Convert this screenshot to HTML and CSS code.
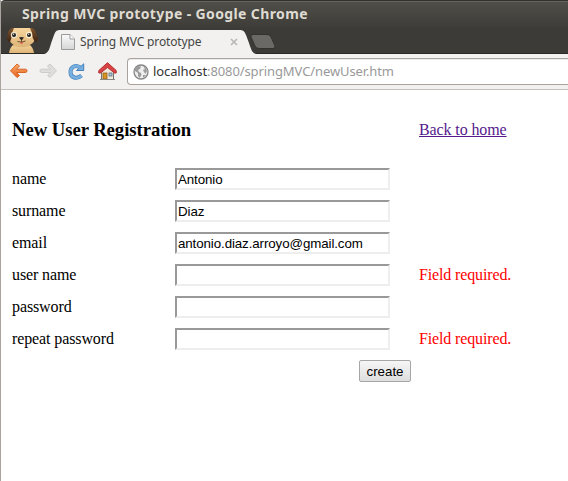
FILE: index.html
```html
<!DOCTYPE html>
<html lang="en">
<head>
<meta charset="utf-8">
<title>Spring MVC prototype</title>
<link rel="stylesheet" href="styles.css">
</head>
<body>
<div class="window">
  <header class="chrome">
    <div class="titlebar"><span class="window-title">Spring MVC prototype - Google Chrome</span></div>
    <div class="tabstrip">
      <svg class="avatar" width="32" height="25" viewBox="0 0 32 25">
        <defs>
          <linearGradient id="fur" x2="0" y2="1"><stop stop-color="#f5d69d"/><stop offset="1" stop-color="#dfb578"/></linearGradient>
          <linearGradient id="ear" x2="0" y2="1"><stop stop-color="#80542c"/><stop offset="1" stop-color="#3d2414"/></linearGradient>
        </defs>
        <path d="M2 25Q3 19 7 16H22Q26 19 27 25Z" fill="url(#fur)"/>
        <path d="M6 0H24Q28 3 28 9Q28 18 15 18Q2 18 2 9Q2 3 6 0Z" fill="url(#fur)"/>
        <path d="M7 0Q2 0 1 5L0 10Q0 14 3 14Q5 10 5 5ZM23 0Q28 0 29 5L31 10Q31 14 28 14Q25 10 25 5Z" fill="url(#ear)"/>
        <circle cx="7" cy="7" r="3.2" fill="#efe2ca"/><circle cx="22" cy="7" r="3.2" fill="#fff0d2"/>
        <circle cx="7" cy="7" r="2" fill="#20201e"/><circle cx="22" cy="7" r="2" fill="#20201e"/>
        <circle cx="6.6" cy="6.2" r=".7" fill="#ddd"/><circle cx="21.6" cy="6.2" r=".7" fill="#ddd"/>
        <path d="M12 9.500Q14.500 8.500 17 9.500L15 12H14Z" fill="#292521"/>
        <path d="M14.500 12V14M10.500 13.500Q14.500 15 18.500 13" fill="none" stroke="#493022" stroke-width=".8"/>
        <path d="M13 14.200H16.200L15.500 15.800H13.700Z" fill="#d35347"/>
        <path d="M6 17.500Q15 20 23 17.500" fill="none" stroke="#d3a96e" stroke-width=".8"/>
      </svg>
      <div class="tab">
        <svg class="tab-shape" width="212" height="26" viewBox="0 0 212 26">
          <path d="M0 26C5 25 5.500 20 7.500 14L10 7C11.500 3 12.500 2 17 2H195C199 2 200.500 3 202 7L205 15C207 21 208 25 212 26Z" fill="#f2f1f0"/>
        </svg>
        <svg class="page-icon" width="14" height="17" viewBox="0 0 14 17">
          <defs><linearGradient id="paper" x2="0" y2="1"><stop stop-color="#fafafa"/><stop offset="1" stop-color="#d5d5d5"/></linearGradient></defs>
          <path d="M.5 .5H9L13.500 5V15.500H.5Z" fill="url(#paper)" stroke="#9b9b9b"/><path d="M9 .5V5H13.500" fill="#fff" stroke="#9b9b9b"/>
        </svg>
        <span class="tab-title">Spring MVC prototype</span>
        <svg class="close" width="8" height="8" viewBox="0 0 8 8"><path d="M1 1L7 7M7 1L1 7" stroke="#b6b5b3" stroke-width="1.500"/></svg>
      </div>
      <svg class="new-tab" width="26" height="15" viewBox="0 0 26 15"><path d="M3 .5H17Q20 .5 21 3L25 12Q25.500 14.500 23 14.500H9Q6 14.500 5 12L1 3Q.5 .5 3 .5Z" fill="#6a6965" stroke="#33322e"/></svg>
    </div>
    <div class="toolbar">
      <svg class="back" width="19" height="16" viewBox="0 0 19 16">
        <defs><linearGradient id="orange" x2="0" y2="1"><stop stop-color="#f9ad6d"/><stop offset="1" stop-color="#e8621b"/></linearGradient></defs>
        <path d="M8 1L1.500 7.800L8 14.500L10.500 12.500L7.500 9.500H16.500Q18 9.500 18 7.800Q18 6.200 16.500 6.200H7.500L10.500 3Z" fill="url(#orange)" stroke="#d86528" stroke-linejoin="round"/>
      </svg>
      <svg class="forward" width="19" height="16" viewBox="0 0 19 16">
        <path d="M11 1L17.500 7.800L11 14.500L8.500 12.500L11.500 9.500H2.500Q1 9.500 1 7.800Q1 6.200 2.500 6.200H11.500L8.500 3Z" fill="#dfdedd" stroke="#cccbc9" stroke-linejoin="round"/>
      </svg>
      <svg class="reload" width="17" height="17" viewBox="0 0 17 17">
        <path d="M12 4.500C7 1 2.500 4.500 2.500 9C2.500 15 9 16.500 13.500 12.500" fill="none" stroke="#437fb9" stroke-width="4"/>
        <path d="M15.700 .8V7.500H8.500Z" fill="#77afe0" stroke="#437fb9" stroke-linejoin="round"/>
        <path d="M12 4.500C7 1 2.500 4.500 2.500 9C2.500 15 9 16.500 13.300 12.700" fill="none" stroke="#77afe0" stroke-width="2.800"/>
      </svg>
      <svg class="home" width="19" height="19" viewBox="0 0 19 19">
        <path d="M3.500 8.500L9.500 3.500L15.500 8.500V17.500H3.500Z" fill="#eee9df" stroke="#77736d"/>
        <rect x="5" y="11" width="4" height="6" fill="#d79420" stroke="#936018" stroke-width=".8"/>
        <rect x="11" y="11" width="3" height="3" fill="#a4c7e6" stroke="#65727b" stroke-width=".8"/>
        <path d="M2 17.500H17" stroke="#888"/>
        <path d="M9.500 .7L.8 8.500V11H2.500L9.500 5.500L16.500 11H18.200V8.500Z" fill="#d94345" stroke="#b52f32" stroke-linejoin="round"/>
      </svg>
      <div class="address">
        <svg class="globe" width="16" height="16" viewBox="0 0 16 16">
          <circle cx="8" cy="8" r="7" fill="#eee" stroke="#858585" stroke-width="1.300"/>
          <path d="M2 4L5 2L8 2.500L7 5L5 6L6 8L8 9L8.500 11L6.500 14L5 12V9L2 7ZM10 2L13 4L14 7L12.500 10L11 8L10 6L12 5ZM10 11L13 11L10 14Z" fill="#9c9c9c"/>
        </svg>
        <span class="url"><span class="host">localhost</span>:8080/springMVC/newUser.htm</span>
      </div>
    </div>
  </header>
  <main class="page">
    <form class="registration">
      <h3>New User Registration</h3><div class="home-link"><a href="#">Back to home</a></div>
      <label for="name">name</label><input id="name" type="text" value="Antonio"><span></span>
      <label for="surname">surname</label><input id="surname" type="text" value="Diaz"><span></span>
      <label for="email">email</label><input id="email" type="text" value="antonio.diaz.arroyo@gmail.com"><span></span>
      <label for="username">user name</label><input id="username" type="text"><span class="error">Field required.</span>
      <label for="password">password</label><input id="password" type="password"><span></span>
      <label for="repeat">repeat password</label><input id="repeat" type="password"><span class="error">Field required.</span>
      <div class="actions"><button type="button">create</button></div>
    </form>
  </main>
</div>
</body>
</html>
```
FILE: styles.css
```css
* { box-sizing: border-box; }
body { margin: 0; background: #fff; font-family: "Liberation Serif", serif; font-size: 16px; color: #000; }
.window { height: 481px; overflow: hidden; border-left: 1px solid #aaa49f; }
.chrome { margin-left: -1px; height: 90px; font-family: "Noto Sans", sans-serif; }
.titlebar { height: 28px; border-top: 1px solid #32312e; box-shadow: inset 0 1px #65645f; background: linear-gradient(#504f49, #3d3c38); padding-left: 22px; white-space: nowrap; border-radius: 5px 0 0; }
.window-title { color: #dfdbd2; font: bold 14px/25px "Noto Sans", sans-serif; letter-spacing: .38px; }
.tabstrip { height: 26px; display: flex; background: linear-gradient(#3c3b37 25px, #292925 25px); padding-left: 7px; }
.avatar { flex: none; }
.tab { position: relative; width: 212px; height: 26px; margin-left: 5px; padding-left: 17px; display: flex; flex: none; }
.tab-shape { position: absolute; left: 0; top: 0; }
.page-icon { position: relative; margin-top: 6px; flex: none; }
.tab-title { position: relative; margin-left: 5px; width: 149px; font-size: 12px; line-height: 27px; color: #454542; white-space: nowrap; letter-spacing: -.14px; }
.close { position: relative; margin: 10px 0 0 1px; flex: none; }
.new-tab { margin: 6px 0 0 -6px; flex: none; position: relative; }
.toolbar { height: 36px; display: flex; background: #f2f1f0; border-bottom: 1px solid #c4c0bc; padding-left: 9px; }
.toolbar > svg { flex: none; }
.back { margin-top: 9px; }
.forward { margin: 9px 0 0 11px; }
.reload { margin: 9px 0 0 10px; }
.home { margin: 8px 0 0 13px; }
.address { flex: 1; margin: 4px 0 0 10px; height: 27px; display: flex; align-items: center; background: #fff; border: 1px solid #aaa39d; border-right: 0; border-radius: 4px 0 0 4px; box-shadow: inset 0 1px #eeeceb; padding-left: 5px; }
.globe { flex: none; }
.url { margin-left: 4px; font-size: 13px; line-height: 18px; padding-bottom: 1px; color: #999; white-space: nowrap; letter-spacing: -.1px; }
.host { color: #333; }
.page { padding: 20px 0 0 11px; }
.registration { display: grid; grid-template-columns: 163px 244px 149px; grid-template-rows: 53px repeat(7, 32px); letter-spacing: -.11px; }
.registration > label, .registration > .error { line-height: 32px; }
.registration h3 { grid-column: span 2; margin: 0; font-size: 18.72px; line-height: 40px; letter-spacing: -.06px; }
.home-link { line-height: 40px; }
.registration a { color: #551a8b; }
.registration input { width: 215px; height: 22px; margin: 5px 0 0; padding: 1px; border: 2px solid; border-color: #999 #eee #eee #999; background: #fff; color: #000; font: 13.333px "Liberation Sans", sans-serif; letter-spacing: -.1px; }
.registration .error { color: #f00; letter-spacing: -.14px; }
.actions { grid-column: 1 / 3; padding: 5px 8px 0 0; text-align: right; line-height: 0; }
.actions button { width: 52px; height: 22px; padding: 0; border: 1px solid #a6a6a6; border-radius: 2px; background: linear-gradient(#f6f6f6, #dedede); color: #000; font: 13.333px "Liberation Sans", sans-serif; }
```
